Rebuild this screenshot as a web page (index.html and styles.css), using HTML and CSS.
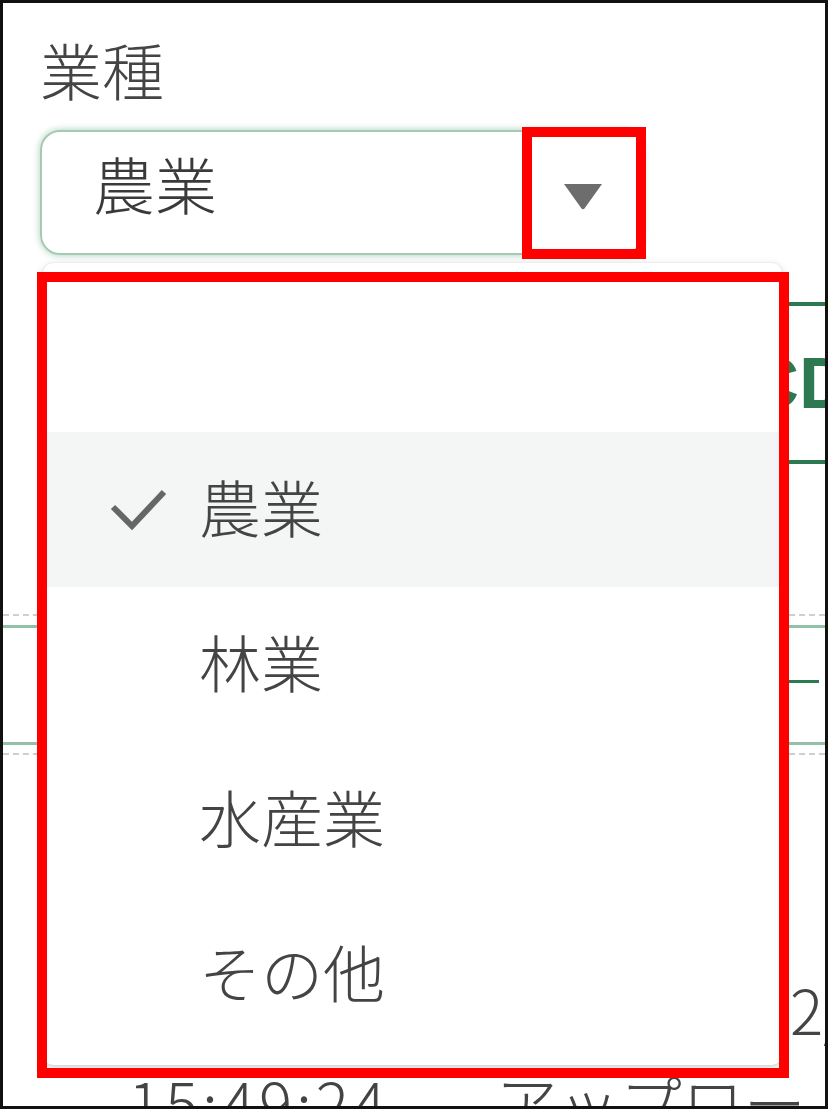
FILE: index.html
```html
<!DOCTYPE html>
<html lang="ja">
<head>
    <meta charset="UTF-8">
    <meta name="viewport" content="width=device-width, initial-scale=1.0">
    <title>業種</title>
    <link rel="stylesheet" href="styles.css">
</head>
<body>
    <div class="frame">
        <div class="field">
            <div class="field-label">業種</div>
            <div class="select">
                <span class="select-value">農業</span>
                <svg class="select-arrow" width="40" height="27" viewBox="0 0 40 27">
                    <path d="M1 1 H39 L21.5 25.5 Q20 27 18.5 25.5 Z" fill="#6d6d6d"/>
                </svg>
            </div>
        </div>

        <!-- page content behind the open menu -->
        <div class="content">
            <div class="toolbar">
                <div class="btn">CD</div>
            </div>
            <div class="list">
                <div class="list-body">
                    <span class="indicator"></span>
                </div>
            </div>
            <div class="list-foot"></div>
            <div class="date">2/</div>
            <div class="log-row">
                <span class="log-time">15:49:24</span>
                <span class="log-action">アップロード</span>
            </div>
        </div>

        <ul class="menu">
            <li class="menu-item"></li>
            <li class="menu-item selected">
                <svg class="check" width="58" height="44" viewBox="0 0 58 44">
                    <polyline points="4,21 23,40 55,6" fill="none" stroke="#666" stroke-width="6"/>
                </svg>
                <span>農業</span>
            </li>
            <li class="menu-item"><span></span><span>林業</span></li>
            <li class="menu-item"><span></span><span>水産業</span></li>
            <li class="menu-item"><span></span><span>その他</span></li>
        </ul>

        <div class="mark mark-arrow"></div>
        <div class="mark mark-menu"></div>
    </div>
</body>
</html>
```

FILE: styles.css
```css
body {
    margin: 0;
    background-color: #fff;
    font-family: "Noto Sans CJK JP", "Noto Sans", sans-serif;
    font-weight: 300;
    color: #444;
}

.frame {
    position: relative;
    box-sizing: border-box;
    width: 828px;
    height: 1109px;
    border: 3px solid #111;
    overflow: hidden;
}

.field {
    padding: 35px 0 0 37px;
}

.field-label {
    font-size: 62px;
    line-height: 62px;
}

.select {
    display: flex;
    align-items: center;
    box-sizing: border-box;
    width: 603px;
    height: 125px;
    margin-top: 30px;
    padding-left: 51px;
    border: 2px solid #a3cab4;
    border-radius: 20px;
    box-shadow: 0 0 6px 1px rgba(90, 160, 120, 0.4);
}

.select-value {
    font-size: 62px;
    line-height: 62px;
    color: #3a3a3a;
    margin-bottom: 20px;
}

.select-arrow {
    margin-left: auto;
    margin-right: 38px;
    margin-top: 8px;
}

/* background page */
.content {
    margin-top: 47px;
}

.btn {
    box-sizing: border-box;
    height: 162px;
    margin-left: 560px;
    width: 400px;
    padding-left: 184px;
    border-top: 4px solid #2d7a52;
    border-bottom: 4px solid #2d7a52;
    color: #2d7a52;
    font-family: "Liberation Sans", Arial, sans-serif;
    font-weight: bold;
    font-size: 72px;
    line-height: 154px;
}

.list {
    margin-top: 150px;
    border-top: 2px dashed #cfcfcf;
}

.list-body {
    margin-top: 9px;
    height: 62px;
    padding-top: 52px;
    border-top: 3px solid #93c1a8;
    border-bottom: 3px solid #93c1a8;
}

.indicator {
    display: block;
    width: 30px;
    height: 3px;
    margin-left: 786px;
    background-color: #2d7a52;
}

.list-foot {
    margin-top: 8px;
    border-top: 2px dashed #cfcfcf;
}

.date {
    margin-top: 222px;
    padding-left: 787px;
    font-size: 62px;
    line-height: 62px;
}

.log-row {
    margin-top: 31px;
    padding-left: 125px;
    font-size: 62px;
    line-height: 62px;
    white-space: nowrap;
}

.log-time {
    letter-spacing: 4px;
}

.log-action {
    margin-left: 92px;
}

/* open dropdown */
.menu {
    position: absolute;
    left: 40px;
    top: 260px;
    width: 739px;
    height: 802px;
    box-sizing: border-box;
    margin: 0;
    padding: 14px 0 13px;
    list-style: none;
    background-color: #fff;
    border-radius: 10px;
    box-shadow: 0 3px 10px rgba(0, 0, 0, 0.18), 0 0 2px rgba(0, 0, 0, 0.12);
}

.menu-item {
    display: grid;
    grid-template-columns: 90px 1fr;
    align-items: center;
    box-sizing: border-box;
    height: 155px;
    padding: 0 0 8px 66px;
    font-size: 62px;
    line-height: 62px;
    color: #444;
}

.menu-item.selected {
    background-color: #f3f6f5;
}

.check {
    margin-top: 4px;
}

/* annotation boxes */
.mark {
    position: absolute;
    box-sizing: border-box;
    border: 10px solid #ff0000;
}

.mark-arrow {
    left: 519px;
    top: 124px;
    width: 124px;
    height: 132px;
}

.mark-menu {
    left: 34px;
    top: 269px;
    width: 752px;
    height: 806px;
}
```
